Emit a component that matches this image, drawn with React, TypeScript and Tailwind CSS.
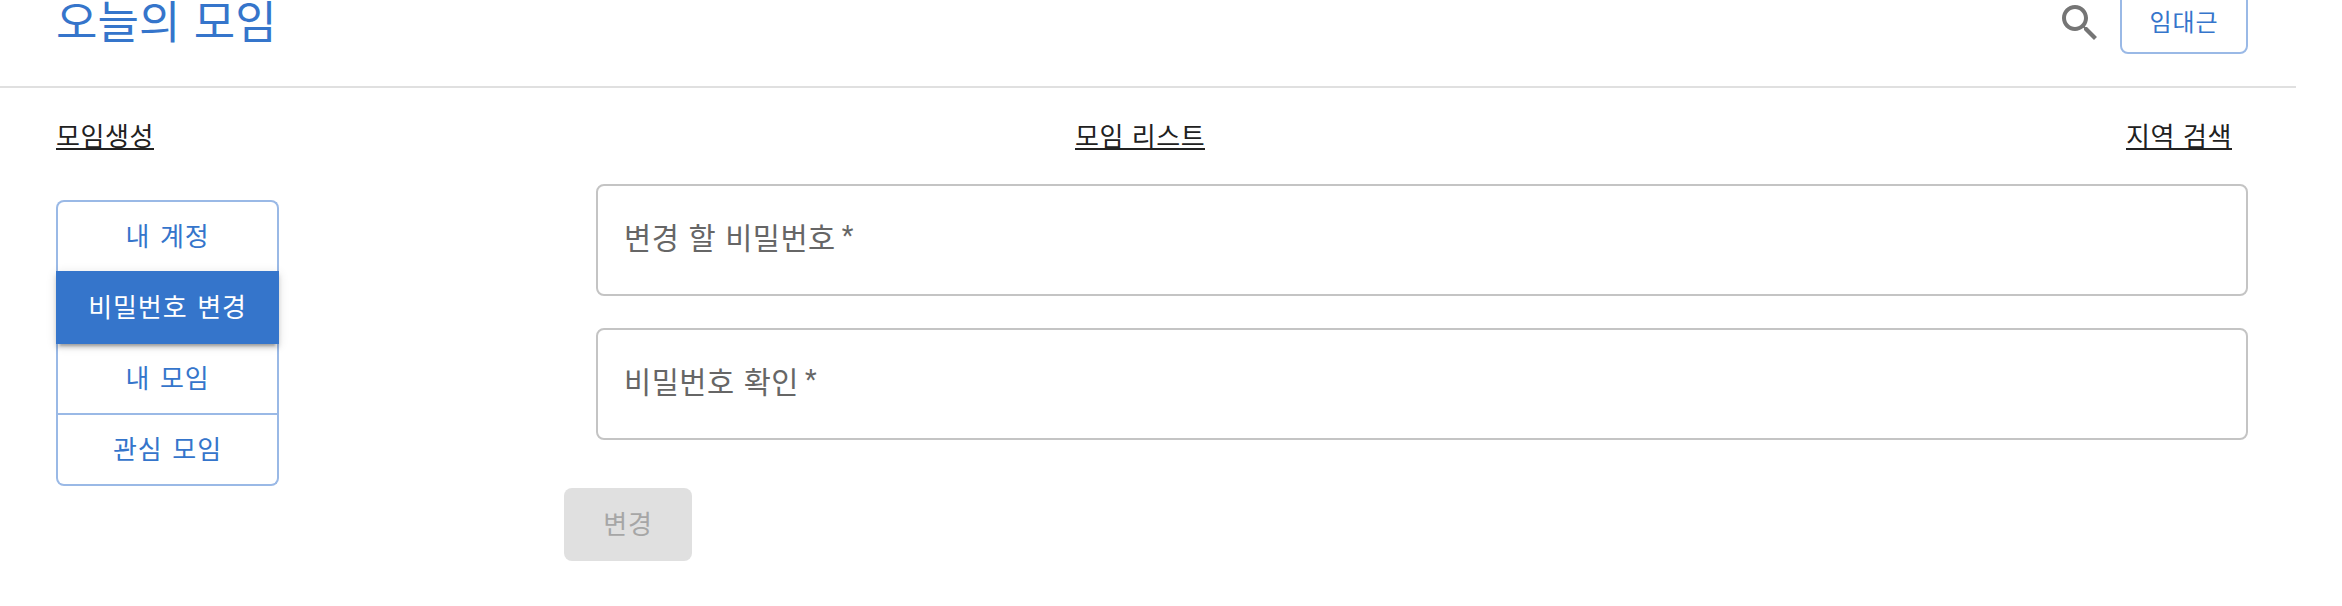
const navLinks = ['모임생성', '모임 리스트', '지역 검색'];

const menuItems = [
  { label: '내 계정', style: 'h-[71px] rounded-t-lg border-2 border-b-0 border-[#9ab9e6] pb-[3px] text-[#3575cb]' },
  {
    label: '비밀번호 변경',
    style:
      'z-10 h-[73px] bg-[#3575cb] pb-[3px] text-white shadow-[0_6px_2px_-4px_rgba(0,0,0,0.2),0_4px_4px_rgba(0,0,0,0.14),0_2px_10px_rgba(0,0,0,0.12)]',
  },
  { label: '내 모임', style: 'h-[71px] border-2 border-t-0 border-[#9ab9e6] pb-[3px] text-[#3575cb]' },
  { label: '관심 모임', style: 'h-[71px] rounded-b-lg border-2 border-t-0 border-[#9ab9e6] pb-[3px] text-[#3575cb]' },
];

const fields = ['변경 할 비밀번호', '비밀번호 확인'];

function SearchIcon() {
  return (
    <svg viewBox="0 0 24 24" className="-mt-px size-12 shrink-0 fill-[#757575]">
      <path d="M15.5 14h-.79l-.28-.27C15.41 12.59 16 11.11 16 9.5 16 5.91 13.09 3 9.5 3S3 5.91 3 9.5 5.91 16 9.5 16c1.61 0 3.09-.59 4.23-1.57l.27.28v.79l5 4.99L20.49 19l-4.99-5zm-6 0C7.01 14 5 11.99 5 9.5S7.01 5 9.5 5 14 7.01 14 9.5 11.99 14 9.5 14z" />
    </svg>
  );
}

export default function App() {
  return (
    <div className="h-[606px] overflow-hidden bg-white font-['Noto_Sans_CJK_KR',sans-serif] text-[#212121]">
      <header className="flex h-[88px] w-[2296px] items-start overflow-hidden border-b-2 border-[#e0e0e0] pr-12 pl-14">
        <h1 className="-mt-3 flex-1 text-[45px] leading-[64px] font-normal tracking-[0.1px] text-[#3575cb] [word-spacing:3px]">
          오늘의 모임
        </h1>
        <SearchIcon />
        <button className="-mt-2 ml-4 flex h-[62px] w-32 items-center justify-center rounded-lg border-2 border-[#9ab9e6] pb-[5px] text-[24px] leading-none font-normal tracking-[0.9px] text-[#3575cb]">
          임대근
        </button>
      </header>

      <nav className="flex h-24 w-[2232px] items-start justify-between pt-7 pl-14">
        {navLinks.map((label) => (
          <a
            key={label}
            className="h-[34px] border-b-2 border-[#212121] text-[26px] leading-[37px] font-normal tracking-[0.6px] whitespace-nowrap [word-spacing:1.4px]"
          >
            {label}
          </a>
        ))}
      </nav>

      <main className="flex pl-14">
        <div className="mt-4 flex w-[223px] shrink-0 flex-col">
          {menuItems.map(({ label, style }) => (
            <button
              key={label}
              className={`relative flex items-center justify-center text-[26px] leading-none font-normal tracking-[0.9px] [word-spacing:3px] ${style}`}
            >
              {label}
            </button>
          ))}
        </div>

        <form className="ml-[285px] w-[1684px]">
          <div className="flex flex-col gap-8 pl-8">
            {fields.map((label) => (
              <label
                key={label}
                className="flex h-28 items-center rounded-lg border-2 border-[#c4c4c4] pb-[7px] pl-[26px] text-[29.5px] leading-none font-normal tracking-[0.5px] text-[#666] [word-spacing:2px]"
              >
                {label}
                <span className="ml-1.5 font-[Roboto,sans-serif] text-[27px]">*</span>
              </label>
            ))}
          </div>
          <button className="mt-12 flex h-[73px] w-32 items-center justify-center rounded-lg bg-[#e0e0e0] pb-[3px] text-[26px] leading-none font-normal tracking-[0.9px] text-[#a6a6a6]">
            변경
          </button>
        </form>
      </main>
    </div>
  );
}
